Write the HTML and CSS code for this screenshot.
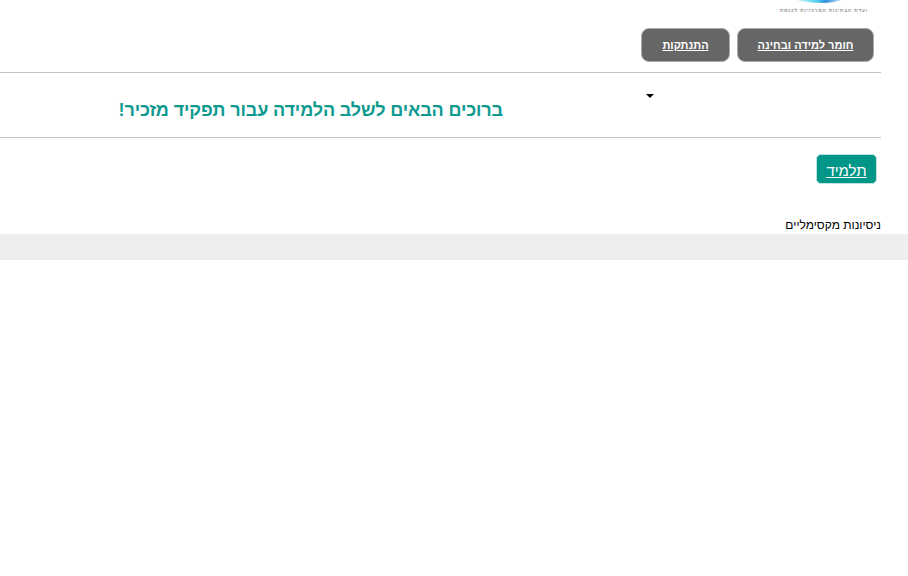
FILE: index.html
```html
<!DOCTYPE html>
<html lang="he" dir="rtl">
<head>
<meta charset="utf-8">
<title>שלב הלמידה</title>
<link rel="stylesheet" href="styles.css">
</head>
<body>
<div class="page">
  <header class="top">
    <div class="logo">
      <svg class="logo-mark" width="60" height="4" viewBox="0 0 60 4" aria-hidden="true">
        <defs>
          <linearGradient id="logo-fade" x1="0" y1="0" x2="1" y2="0">
            <stop offset="0" stop-color="#d8f6fb"/>
            <stop offset="0.45" stop-color="#4fd0ee"/>
            <stop offset="0.65" stop-color="#2f8fdc"/>
            <stop offset="1" stop-color="#cfe6f7"/>
          </linearGradient>
        </defs>
        <path d="M6 0 H52 C44 2.600 36 3.200 28 2.800 C20 2.400 12 1.500 6 0 Z" fill="url(#logo-fade)"/>
      </svg>
      <div class="logo-text">ועדת הבחינות המרכזיות לכנסת</div>
    </div>
    <nav class="nav">
      <a class="nav-btn" href="#">חומר למידה ובחינה</a>
      <a class="nav-btn" href="#">התנתקות</a>
    </nav>
  </header>
  <section class="welcome">
    <span class="caret"></span>
    <h1 class="title">ברוכים הבאים לשלב הלמידה עבור תפקיד מזכיר!</h1>
  </section>
  <section class="roles">
    <a class="role-btn" href="#">תלמיד</a>
  </section>
  <div class="attempts">ניסיונות מקסימליים</div>
</div>
<div class="strip"></div>
</body>
</html>
```
FILE: styles.css
```css
* { box-sizing: border-box; }
html, body { margin: 0; padding: 0; background: #fff; }
body { font-family: "Liberation Sans", Arial, sans-serif; color: #000; }
.page { width: 881px; margin-left: 0; margin-right: 27px; }
.top { height: 73px; border-bottom: 1px solid #c4c4c4; display: flex; flex-direction: column; }
.logo { height: 28px; padding-right: 13px; display: flex; flex-direction: column; align-items: flex-start; }
.logo-mark { display: block; margin-right: 18px; }
.logo-text { font-size: 5px; line-height: 9px; margin-top: 2px; letter-spacing: 0.85px; color: #666; white-space: nowrap; }
.nav { display: flex; gap: 7px; padding-right: 7px; }
.nav-btn { height: 34px; display: flex; align-items: center; justify-content: center; background: #666; border: 1px solid #aaa; border-radius: 8px; color: #fff; font-size: 11px; font-weight: bold; text-decoration: underline; width: 137px; }
.nav-btn + .nav-btn { width: 89px; }
.welcome { height: 65px; border-bottom: 1px solid #c4c4c4; position: relative; padding-right: 378px; display: flex; align-items: flex-start; }
.title { margin: 25px 0 0; font-size: 18px; line-height: 24px; font-weight: bold; color: #0f9a90; white-space: nowrap; letter-spacing: -0.13px; }
.caret { position: absolute; left: 646px; top: 21px; width: 0; height: 0; border-top: 4px solid #000; border-left: 4px solid transparent; border-right: 4px solid transparent; }
.roles { padding: 16px 4px 0 0; height: 79px; display: flex; }
.role-btn { height: 30px; width: 61px; padding-top: 2px; display: flex; align-items: center; justify-content: center; background: #009688; border: 1px solid #bfe3df; border-radius: 5px; color: #fff; font-size: 15px; text-decoration: underline; }
.attempts { height: 17px; font-size: 12px; line-height: 17px; }
.strip { height: 26px; background: #eee; }
```
